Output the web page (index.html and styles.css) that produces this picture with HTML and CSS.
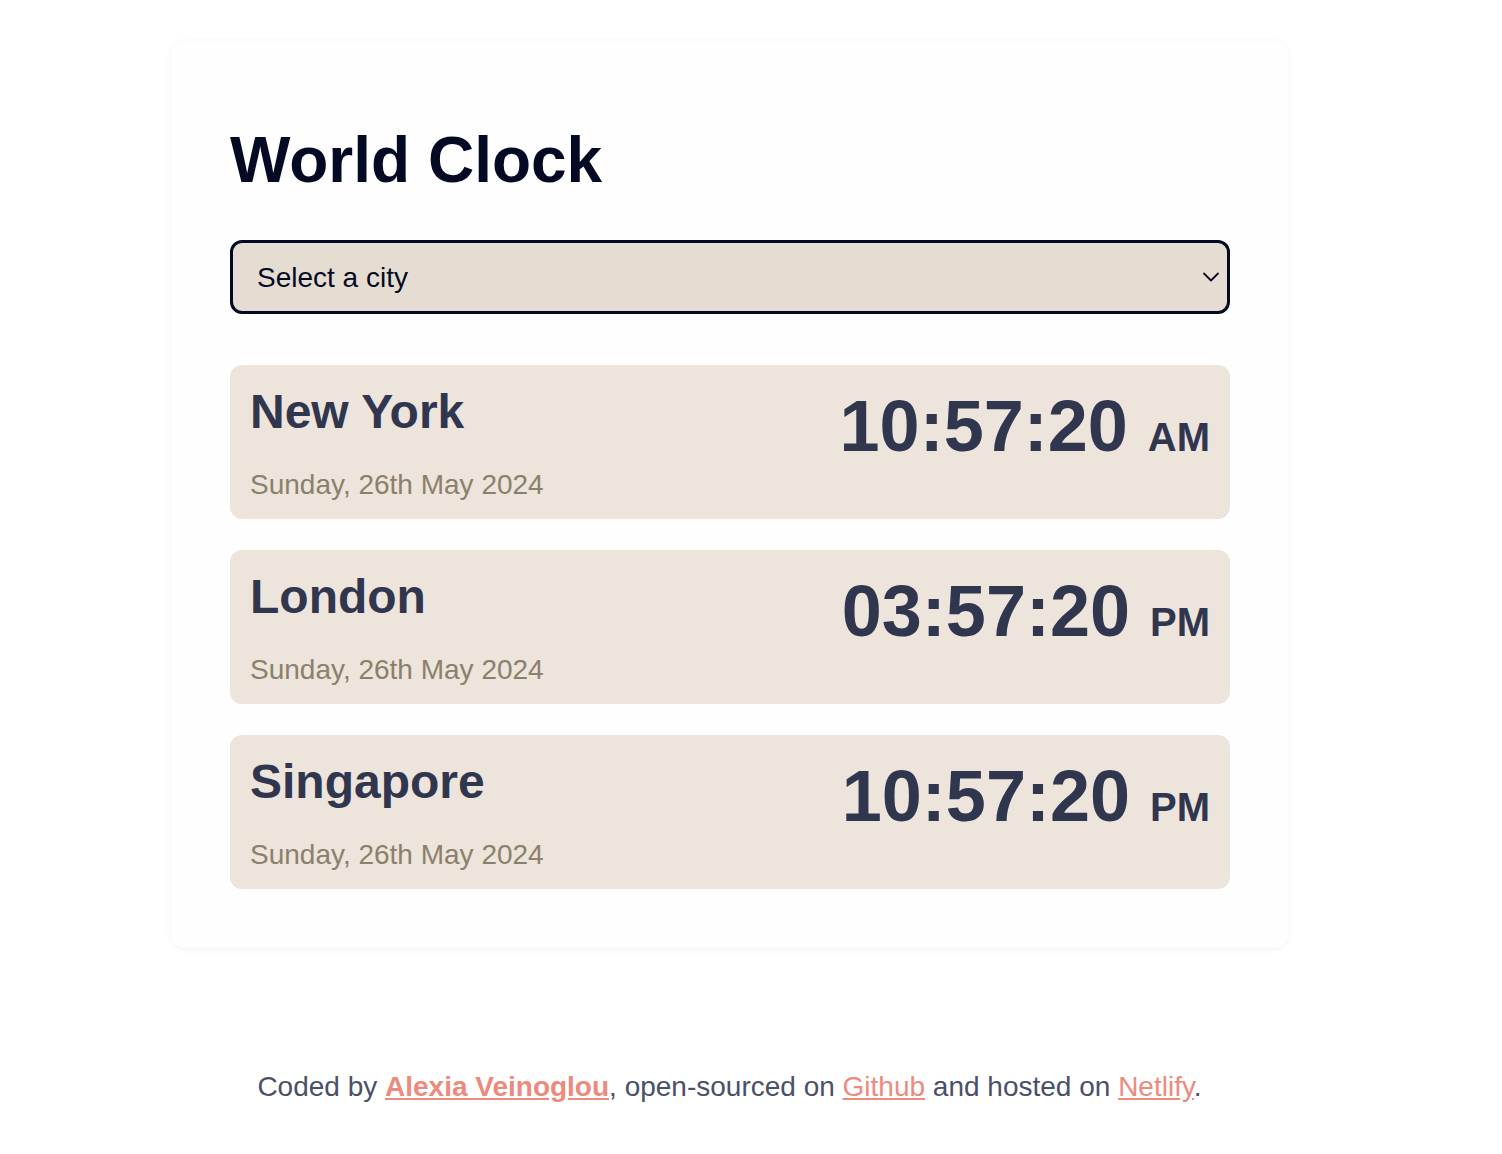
FILE: index.html
```html
<!DOCTYPE html>
<html lang="en">
<head>
<meta charset="utf-8">
<title>World Clock</title>
<link rel="stylesheet" href="styles.css">
</head>
<body>
<div class="page">
  <main class="container">
    <h1 class="title">World Clock</h1>
    <div class="select-wrap">
      <select class="city-select">
        <option>Select a city</option>
        <option>New York</option>
        <option>London</option>
        <option>Singapore</option>
      </select>
      <svg class="chevron" width="18" height="12" viewBox="0 0 18 12" aria-hidden="true">
        <path d="M2 2.5 L9 9.5 L16 2.5" fill="none" stroke="#0b0d24" stroke-width="1.8" stroke-linecap="round" stroke-linejoin="round"/>
      </svg>
    </div>
    <div class="cities">
      <div class="city">
        <div class="city-info">
          <h2 class="city-name">New York</h2>
          <div class="city-date">Sunday, 26th May 2024</div>
        </div>
        <div class="city-time">10:57:20 <small class="ampm">AM</small></div>
      </div>
      <div class="city">
        <div class="city-info">
          <h2 class="city-name">London</h2>
          <div class="city-date">Sunday, 26th May 2024</div>
        </div>
        <div class="city-time">03:57:20 <small class="ampm">PM</small></div>
      </div>
      <div class="city">
        <div class="city-info">
          <h2 class="city-name">Singapore</h2>
          <div class="city-date">Sunday, 26th May 2024</div>
        </div>
        <div class="city-time">10:57:20 <small class="ampm">PM</small></div>
      </div>
    </div>
  </main>
  <footer class="footer">
    Coded by <a class="author" href="#">Alexia Veinoglou</a>, open-sourced on <a href="#">Github</a> and hosted on <a href="#">Netlify</a>.
  </footer>
</div>
</body>
</html>
```

FILE: styles.css
```css
* { box-sizing: border-box; }

body {
  margin: 0;
  padding: 0 43px 0 0;
  background: #ffffff;
  font-family: "Liberation Sans", Arial, Helvetica, sans-serif;
}

.page {
  max-width: 1117px;
  margin: 41px auto 0;
}

.container {
  background: #fffefe;
  border-radius: 14px;
  box-shadow: 0 1px 6px rgba(40, 30, 20, 0.06);
  padding: 59px 58px 59px 59px;
}

.title {
  margin: 22px 0 0;
  font-size: 64px;
  line-height: 1.2;
  font-weight: 700;
  color: #040a24;
}

.select-wrap {
  position: relative;
  margin-top: 41px;
}

.city-select {
  appearance: none;
  -webkit-appearance: none;
  width: 100%;
  height: 74px;
  border: 3px solid #040a24;
  border-radius: 12px;
  background: #e6ddd2;
  color: #040a24;
  font-family: inherit;
  font-size: 28px;
  padding: 2px 24px 0;
  outline: none;
}

.chevron {
  position: absolute;
  right: 10px;
  top: 31px;
}

.cities {
  display: flex;
  flex-direction: column;
  gap: 31px;
  margin-top: 51px;
}

.city {
  display: flex;
  justify-content: space-between;
  align-items: flex-start;
  background: #ede4db;
  border-radius: 12px;
  padding: 21px 20px 17px 20px;
  height: 154px;
}

.city-name {
  margin: 0;
  font-size: 48px;
  line-height: 1.1;
  font-weight: 700;
  color: #31364f;
}

.city-date {
  margin-top: 29px;
  font-size: 28px;
  line-height: 1.2;
  color: #8b806b;
}

.city-time {
  margin-top: 4px;
  font-size: 72px;
  line-height: 1;
  font-weight: 700;
  color: #31364f;
  white-space: nowrap;
}

.ampm {
  font-size: 40px;
  font-weight: 700;
}

.footer {
  margin-top: 122px;
  text-align: center;
  font-size: 28px;
  line-height: 1.2;
  color: #4b5069;
}

.footer a {
  color: #ec8a7e;
  text-decoration: underline;
}

.footer .author {
  font-weight: 700;
}
```
